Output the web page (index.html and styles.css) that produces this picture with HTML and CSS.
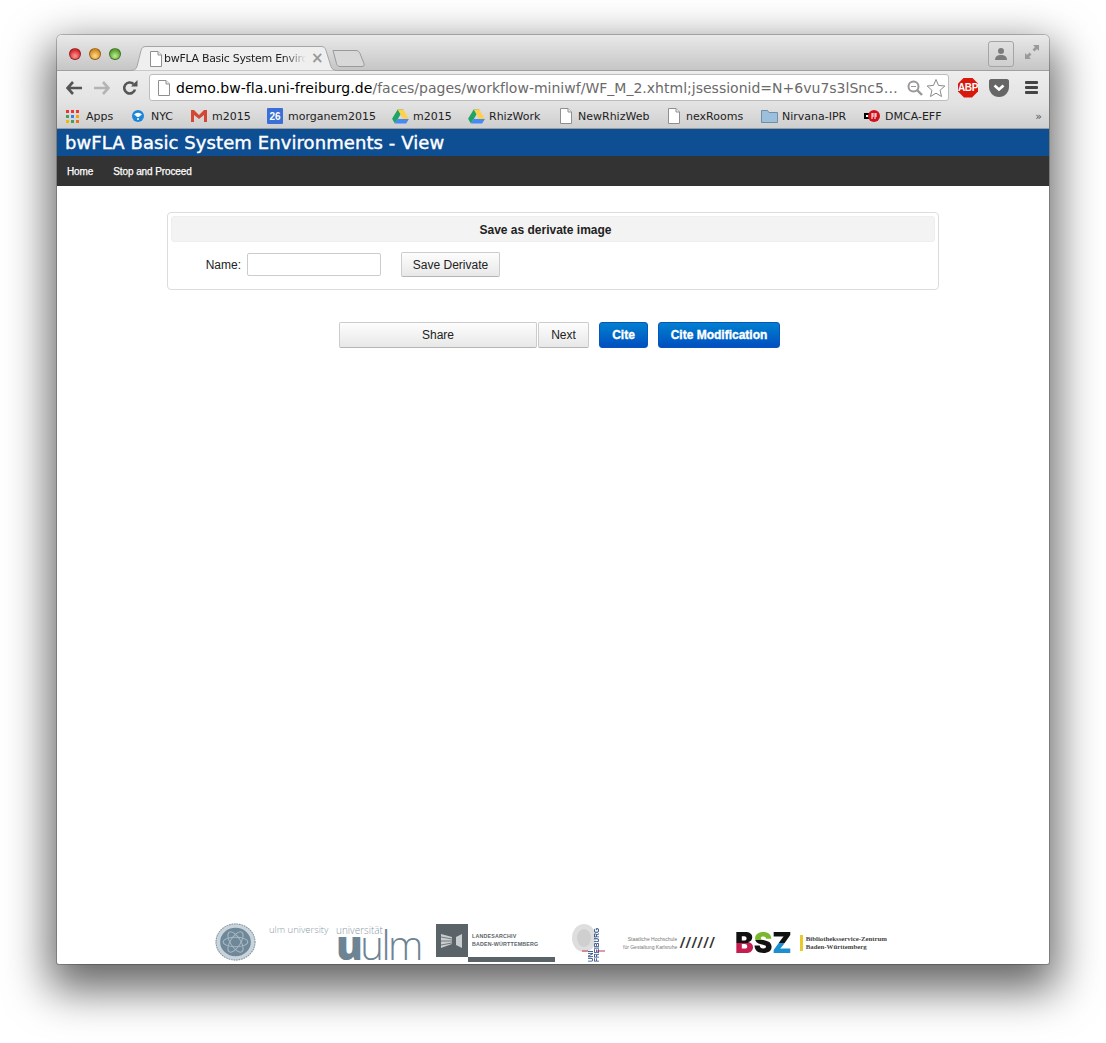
FILE: index.html
```html
<!DOCTYPE html>
<html lang="en">
<head>
<meta charset="utf-8">
<title>bwFLA Basic System Environments - View</title>
<link rel="stylesheet" href="styles.css">
</head>
<body>
<svg class="defs" width="0" height="0" aria-hidden="true">
  <symbol id="doc" viewBox="0 0 14 16"><path d="M1.500.5h7.500l3.500 3.500v11.500h-11z" fill="#fff" stroke="#8f8f8f"/><path d="M9 .5v3.500h3.500" fill="#eee" stroke="#8f8f8f"/></symbol>
  <symbol id="drive" viewBox="0 0 18 16"><path d="M6 .5h6l-6 10.500-3 4.500-3-5z" fill="#1fa463"/><path d="M6 .5h6l6 10.500h-6z" fill="#ffd04b"/><path d="M3 15.500l3-4.800h12l-3 4.800z" fill="#4688f4"/></symbol>
</svg>
<div class="window">
  <div class="titlebar">
    <div class="lights"><i class="light red"></i><i class="light amber"></i><i class="light green"></i></div>
    <div class="tab">
      <svg class="tab-shape" viewBox="0 0 208 25" preserveAspectRatio="none"><path d="M0 24.500c4 0 6-1 7-4l4-16c1-3 2-4 5-4h175c3 0 4 1 5 4l5 16c1 3 3 4 7 4" fill="#efefef" stroke="#a5a5a5"/></svg>
      <svg class="ic-doc"><use href="#doc"/></svg>
      <span class="tab-title">bwFLA Basic System Enviro</span>
      <span class="tab-close">×</span>
    </div>
    <svg class="newtab" viewBox="0 0 33 17"><path d="M1 .500h23c2 0 3 1 4 3l4 10c.5 2 0 3-2 3H8c-2 0-3-1-3.500-3L1 .500z" fill="#d8d8d8" stroke="#999"/></svg>
    <div class="spacer"></div>
    <div class="profile"><svg viewBox="0 0 14 14" width="14" height="14"><circle cx="7" cy="4" r="3" fill="#7b7b7b"/><path d="M1 13c0-4 3-5 6-5s6 1 6 5z" fill="#7b7b7b"/></svg></div>
    <svg class="fullscreen" viewBox="0 0 16 16" width="16" height="16"><path d="M9 1h6v6l-2-2-2.500 2.500-2-2L11 3zM7 15H1V9l2 2 2.500-2.500 2 2L5 13z" fill="#9a9a9a"/></svg>
  </div>
  <div class="toolbar">
    <svg class="nav-ic" viewBox="0 0 16 14" width="16" height="14"><path d="M7 1L1.500 7 7 13M2 7h14" fill="none" stroke="#555" stroke-width="2.600"/></svg>
    <svg class="nav-ic" viewBox="0 0 16 14" width="16" height="14"><path d="M9 1l5.500 6L9 13M14 7H0" fill="none" stroke="#b4b4b4" stroke-width="2.600"/></svg>
    <svg class="nav-ic" viewBox="0 0 16 16" width="16" height="16"><path d="M13 9.500A5.500 5.500 0 1 1 11.500 4" fill="none" stroke="#555" stroke-width="2.600"/><path d="M9 6.500h6.500V0z" fill="#555"/></svg>
    <div class="omnibox">
      <svg class="ic-doc"><use href="#doc"/></svg>
      <span class="url"><b>demo.bw-fla.uni-freiburg.de</b>/faces/pages/workflow-miniwf/WF_M_2.xhtml;jsessionid=N+6vu7s3lSnc5…</span>
      <svg class="omni-ic" viewBox="0 0 16 16" width="16" height="16"><circle cx="6.500" cy="6.500" r="5" fill="none" stroke="#999" stroke-width="2"/><path d="M10 10l5 5" stroke="#999" stroke-width="2.400"/><path d="M4 6.500h5" stroke="#999"/></svg>
      <svg class="omni-ic" viewBox="0 0 20 20" width="20" height="20"><path d="M10 1.500l2.500 5.900 6.400.6-4.800 4.200 1.400 6.300-5.500-3.300-5.500 3.300 1.400-6.300L1.100 8l6.400-.6z" fill="#fff" stroke="#8a8a8a"/></svg>
    </div>
    <div class="abp">ABP</div>
    <svg class="pocket" viewBox="0 0 20 18" width="20" height="18"><path d="M0 2c0-1 1-2 2-2h16c1 0 2 1 2 2v6c0 5-4 10-10 10S0 13 0 8z" fill="#666"/><path d="M5.500 6.500L10 10.500l4.500-4" fill="none" stroke="#fff" stroke-width="2.600"/></svg>
    <div class="menu"><i></i><i></i><i></i></div>
  </div>
  <div class="bookmarks">
    <a class="bm w66"><span class="apps"><i class="c1"></i><i class="c2"></i><i class="c3"></i><i class="c4"></i><i class="c5"></i><i class="c6"></i><i class="c7"></i><i class="c8"></i><i class="c9"></i></span>Apps</a>
    <a class="bm w59 gap7"><svg class="bm-ic" viewBox="0 0 12 12" width="12" height="12"><circle cx="6" cy="6" r="6" fill="#1c86d8"/><path d="M2 5c2-3 6-3 8 0-2 0-2 2-4 2S4 5 2 5z" fill="#fff"/><circle cx="6" cy="9" r="1" fill="#fff"/></svg>NYC</a>
    <a class="bm w76"><svg class="bm-ic" viewBox="0 0 16 12" width="16" height="12"><path d="M0 0h3l5 5 5-5h3v12h-3V5L8 9 3 5v7H0z" fill="#d14836"/></svg>m2015</a>
    <a class="bm w125"><span class="cal">26</span>morganem2015</a>
    <a class="bm w76 gap4"><svg class="bm-ic" viewBox="0 0 18 16" width="17" height="15"><use href="#drive"/></svg>m2015</a>
    <a class="bm w91 gap4"><svg class="bm-ic" viewBox="0 0 18 16" width="17" height="15"><use href="#drive"/></svg>RhizWork</a>
    <a class="bm w108"><svg class="ic-doc"><use href="#doc"/></svg>NewRhizWeb</a>
    <a class="bm w94"><svg class="ic-doc"><use href="#doc"/></svg>nexRooms</a>
    <a class="bm w103 gap4"><svg class="bm-ic" viewBox="0 0 17 14" width="17" height="14"><path d="M.5 13.500V1.500h6l1.500 2h8.500v10z" fill="#9cc0dc" stroke="#6f8ea8"/></svg>Nirvana-IPR</a>
    <a class="bm"><svg class="bm-ic" viewBox="0 0 16 12" width="16" height="12"><path d="M0 3h8v6H0z" fill="#000"/><path d="M2 5h4v2H2z" fill="#fff"/><circle cx="10" cy="6" r="6" fill="#d0101c"/><path d="M8 3v6M11 3v6M8 4h2M11 4h2M8 6h2M11 6h2" stroke="#fff"/></svg>DMCA-EFF</a>
    <span class="more">»</span>
  </div>
  <header class="app-title">bwFLA Basic System Environments - View</header>
  <nav class="app-nav"><a>Home</a><a>Stop and Proceed</a></nav>
  <main class="content">
    <section class="panel">
      <h2 class="panel-head">Save as derivate image</h2>
      <div class="panel-body">
        <label class="field-label" for="name">Name:</label>
        <input class="field" id="name" type="text">
        <button class="btn save">Save Derivate</button>
      </div>
    </section>
    <div class="actions">
      <button class="btn share">Share</button>
      <button class="btn next">Next</button>
      <button class="btn primary cite">Cite</button>
      <button class="btn primary citemod">Cite Modification</button>
    </div>
  </main>
  <footer class="logos">
    <svg class="seal" viewBox="0 0 40 40" preserveAspectRatio="none"><circle cx="20" cy="20" r="19.500" fill="#c9d3da"/><circle cx="20" cy="20" r="19" fill="none" stroke="#7d93a2" stroke-width="1" stroke-dasharray="1.500 1"/><circle cx="20" cy="20" r="15" fill="#6e8899"/><ellipse cx="20" cy="20" rx="12" ry="5" fill="none" stroke="#a9b8c3"/><ellipse cx="20" cy="20" rx="12" ry="5" fill="none" stroke="#a9b8c3" transform="rotate(60 20 20)"/><ellipse cx="20" cy="20" rx="12" ry="5" fill="none" stroke="#a9b8c3" transform="rotate(120 20 20)"/></svg>
    <span class="ulm-en">ulm university</span>
    <div class="ulm"><span class="ulm-de">universität</span><span class="ulm-big"><b>u</b>ulm</span></div>
    <div class="archiv">
      <svg class="archiv-mark" viewBox="0 0 32 33" width="32" height="33"><rect width="32" height="33" fill="#5a6468"/><path d="M5 10l11 3v7L5 24z" fill="#c9cdcf"/><path d="M20 13l6-3v14l-6-3z" fill="#c9cdcf"/><path d="M5 13l11 2M5 17h11M5 21l11-2" stroke="#5a6468" stroke-width=".8"/></svg>
      <span class="archiv-text">LANDESARCHIV<br>BADEN-WÜRTTEMBERG</span>
      <i class="archiv-bar"></i>
    </div>
    <div class="freiburg">
      <svg class="fr-seal" viewBox="0 0 33 30" width="33" height="30"><ellipse cx="12" cy="14" rx="12" ry="14" fill="#dedede"/><ellipse cx="12" cy="14" rx="7" ry="9" fill="#cfcfcf"/><path d="M10 27h6M25 27h8" stroke="#c0394b"/></svg>
      <span class="fr-text">UNI<br>FREIBURG</span>
    </div>
    <div class="hfg"><span>Staatliche Hochschule<br>für Gestaltung Karlsruhe</span><em>//////</em></div>
    <div class="bsz"><span class="bsz-mark"><i class="b">B</i><i class="s">S</i><i class="z">Z</i></span><i class="bsz-bar"></i><span class="bsz-text">Bibliotheksservice-Zentrum<br>Baden-Württemberg</span></div>
  </footer>
</div>
</body>
</html>
```
FILE: styles.css
```css
* { box-sizing: border-box; }
html, body { margin: 0; background: #fff; }
body { padding: 35px 57px 0; height: 1043px; overflow: hidden; }
.defs { position: absolute; }
.window {
  width: 992px; height: 929px; display: flex; flex-direction: column;
  background: #fff; border-radius: 5px 5px 2px 2px; overflow: hidden;
  font-family: "DejaVu Sans", sans-serif;
  box-shadow: 0 0 0 1px rgba(0,0,0,.22), 0 18px 44px 8px rgba(0,0,0,.6);
}

.titlebar {
  height: 36px; flex: none; display: flex; align-items: flex-start;
  padding: 0 9px 0 12px; position: relative;
  background: linear-gradient(#e9e9e9, #c6c6c6);
  border-bottom: 1px solid #a0a0a0;
}
.lights { display: flex; gap: 8px; margin-top: 13px; }
.light { width: 12px; height: 12px; border-radius: 50%; border: 1px solid rgba(0,0,0,.35); }
.red { background: radial-gradient(circle at 50% 70%, #ff9a95, #d8262b 70%); }
.amber { background: radial-gradient(circle at 50% 70%, #ffdc8b, #d78a1c 70%); }
.green { background: radial-gradient(circle at 50% 70%, #bff08c, #58a032 70%); }
.tab {
  width: 208px; height: 25px; margin: 11px 0 0 9px; position: relative; flex: none;
  display: flex; align-items: center; padding-left: 19px;
}
.tab-shape { position: absolute; inset: 0; width: 100%; height: 100%; }
.tab .ic-doc { position: relative; }
.tab-title {
  position: relative; font-size: 11px; color: #222; margin-left: 1px; width: 142px; letter-spacing: -.3px;
  white-space: nowrap; overflow: hidden; flex: none;
  -webkit-mask-image: linear-gradient(90deg, #000 85%, transparent);
  mask-image: linear-gradient(90deg, #000 85%, transparent);
}
.tab-close { position: relative; margin-left: 5px; font-size: 15px; line-height: 1; color: #999; font-weight: bold; }
.newtab { width: 33px; height: 17px; margin: 15px 0 0 -6px; flex: none; }
.spacer { flex: 1; }
.profile {
  width: 26px; height: 26px; margin-top: 6px; border: 1px solid #a5a5a5; border-radius: 3px;
  display: flex; align-items: center; justify-content: center; background: linear-gradient(#e0e0e0, #cfcfcf);
}
.fullscreen { margin: 9px 0 0 10px; }
.ic-doc { width: 14px; height: 16px; flex: none; }

.toolbar {
  height: 33px; flex: none; display: flex; align-items: center;
  padding: 0 10px 0 9px; gap: 12px; background: linear-gradient(#ededed, #e2e2e2);
}
.nav-ic { flex: none; }
.omnibox {
  width: 800px; height: 27px; margin-left: -1px; display: flex; align-items: center; flex: none;
  padding-left: 7px; padding-right: 2px; background: #fff; border: 1px solid #bdbdbd; border-radius: 3px;
}
.url { flex: 1; font-size: 14px; color: #6a6a6a; margin-left: 5px; white-space: nowrap; overflow: hidden; letter-spacing: .01px; }
.url b { font-weight: normal; color: #000; letter-spacing: .06px; }
.omni-ic { flex: none; margin-left: 3px; }
.abp {
  width: 20px; height: 20px; margin-left: -3px; background: #d8180c; color: #fff; flex: none;
  clip-path: polygon(30% 0, 70% 0, 100% 30%, 100% 70%, 70% 100%, 30% 100%, 0 70%, 0 30%);
  font: bold 10px/20px "Liberation Sans", sans-serif; letter-spacing: -.4px; text-align: center;
}
.pocket { margin-left: -1px; flex: none; }
.menu { margin-left: 4px; width: 13px; display: flex; flex-direction: column; gap: 2px; flex: none; }
.menu i { height: 3px; background: #444; border-radius: 1px; }

.bookmarks {
  height: 25px; flex: none; display: flex; align-items: center; padding-left: 9px;
  background: linear-gradient(#e2e2e2, #cfcfcf); border-bottom: 1px solid #9b9b9b;
  font-size: 11px; color: #222;
}
.bm { display: flex; align-items: center; gap: 5px; white-space: nowrap; flex: none; }
.gap4 { gap: 4px; }
.gap7 { gap: 7px; }
.w66 { width: 66px; } .w59 { width: 59px; } .w76 { width: 76px; } .w125 { width: 125px; }
.w91 { width: 91px; } .w108 { width: 108px; } .w94 { width: 94px; } .w103 { width: 103px; }
.bm-ic { flex: none; }
.apps { display: grid; grid-template-columns: repeat(3, 3px); gap: 2px; width: 14px; margin-right: 1px; }
.apps i { height: 3px; }
.c1, .c2, .c3 { background: #e33; }
.c4 { background: #3aa655; } .c5 { background: #3b7de0; } .c6 { background: #f7a500; }
.c7 { background: #f7b500; } .c8 { background: #3aa655; } .c9 { background: #e8711c; }
.cal {
  width: 16px; height: 16px; background: #3a6fd8; color: #fff; font: bold 10px/18px "Liberation Sans", sans-serif;
  text-align: center; border-radius: 1px; flex: none;
}
.more { margin-left: auto; margin-right: 7px; font-size: 11px; color: #555; }

.app-title {
  height: 27px; flex: none; background: #0e4e92; color: #fff; padding-left: 8px;
  font: 18px/27px "DejaVu Sans", sans-serif; letter-spacing: .08px; -webkit-text-stroke: .4px #fff;
}
.app-nav {
  height: 30px; flex: none; background: #333; display: flex; align-items: center; gap: 20px; padding-left: 10px;
  font: 10px "Liberation Sans", sans-serif; letter-spacing: -.1px; color: #fff; -webkit-text-stroke: .25px #fff;
}

.content { flex: 1; font-family: "Liberation Sans", sans-serif; padding-top: 26px; min-height: 0; }
.panel {
  width: 772px; height: 78px; margin-left: 110px; border: 1px solid #dcdcdc; border-radius: 4px; padding: 3px;
}
.panel-head {
  height: 26px; margin: 0 0 10px; padding-right: 15px; background: #f3f3f3; border: 1px solid #eee; border-radius: 3px;
  text-align: center; font-size: 12px; line-height: 26px; color: #222;
}
.panel-body { display: flex; align-items: center; height: 25px; font-size: 12px; color: #222; }
.field-label { width: 70px; text-align: right; }
.field { width: 134px; height: 23px; margin-left: 6px; border: 1px solid #ccc; border-radius: 2px; background: #fff; }
.btn {
  height: 26px; padding: 0; font: 12px "Liberation Sans", sans-serif; color: #222;
  border: 1px solid #ccc; border-bottom-color: #b5b5b5; border-radius: 2px; background: linear-gradient(#fdfdfd, #e8e8e8);
}
.save { width: 99px; height: 25px; margin-left: 20px; }
.actions { display: flex; margin: 32px 0 0 282px; }
.share { width: 198px; }
.next { width: 51px; margin-left: 1px; }
.primary {
  border: 1px solid #0a55b8; color: #fff; font-weight: bold; background: linear-gradient(#0080d0, #0050c0);
  border-radius: 3px; -webkit-text-stroke: .35px #fff;
}
.cite { width: 49px; margin-left: 10px; }
.citemod { width: 122px; margin-left: 10px; }

.logos {
  height: 43px; flex: none; display: flex; align-items: flex-start; padding-left: 158px;
  position: relative; overflow: hidden;
}
.seal { width: 41px; height: 38px; margin-top: 2px; flex: none; }
.ulm-en { margin: 4px 0 0 13px; font: 300 9.500px/10px "Open Sans", sans-serif; color: #8a9aa6; width: 67px; white-space: nowrap; flex: none; }
.ulm { width: 100px; flex: none; height: 43px; }
.ulm-de { display: block; font: 300 10px/10px "Open Sans", sans-serif; color: #8a9aa6; margin-top: 4px; }
.ulm-big { display: block; font: 300 40px/18px "Open Sans", sans-serif; color: #6d8494; letter-spacing: -2.500px; margin-top: 1px; }
.ulm-big b { font-weight: 800; }
.archiv { width: 119px; height: 43px; position: relative; display: flex; flex: none; margin-top: 3px; }
.archiv-mark { flex: none; }
.archiv-text { font: bold 5.300px/8px "Liberation Sans", sans-serif; color: #5a6468; margin: 8px 0 0 4px; white-space: nowrap; letter-spacing: .2px; }
.archiv-bar { position: absolute; left: 32px; right: 0; top: 33px; height: 5px; background: #5a6468; }
.freiburg { width: 32px; height: 43px; margin-left: 17px; position: relative; flex: none; }
.fr-seal { display: block; margin-top: 3px; overflow: visible; }
.fr-text { position: absolute; left: 16px; bottom: 2px; font: bold 6.500px/6px "Liberation Sans", sans-serif; color: #2b4c86; writing-mode: vertical-rl; transform: rotate(180deg); white-space: nowrap; }
.hfg { display: flex; align-items: center; width: 112px; height: 43px; margin-left: 19px; flex: none; font: 5px/8px "Liberation Sans", sans-serif; color: #777; white-space: nowrap; text-align: right; }
.hfg em { font: italic bold 14px "Liberation Sans", sans-serif; color: #333; letter-spacing: 2px; margin-left: 3px; }
.bsz { display: flex; align-items: center; height: 43px; flex: none; }
.bsz-mark { font: 900 28px "Inter", sans-serif; line-height: 1; display: flex; }
.bsz-mark i { font-style: normal; }
.b { background: linear-gradient(#111 50%, #c51d4f 50%); -webkit-background-clip: text; background-clip: text; -webkit-text-fill-color: transparent; }
.s { background: linear-gradient(#7ab82e 40%, #111 40%); -webkit-background-clip: text; background-clip: text; -webkit-text-fill-color: transparent; }
.z { background: linear-gradient(#111 50%, #1d8fd0 50%); -webkit-background-clip: text; background-clip: text; -webkit-text-fill-color: transparent; }
.bsz-bar { width: 3px; height: 16px; background: #e9c92c; margin: 0 3px 0 8px; }
.bsz-text { font: bold 6.800px/8px "Liberation Serif", serif; color: #444; white-space: nowrap; }
```
